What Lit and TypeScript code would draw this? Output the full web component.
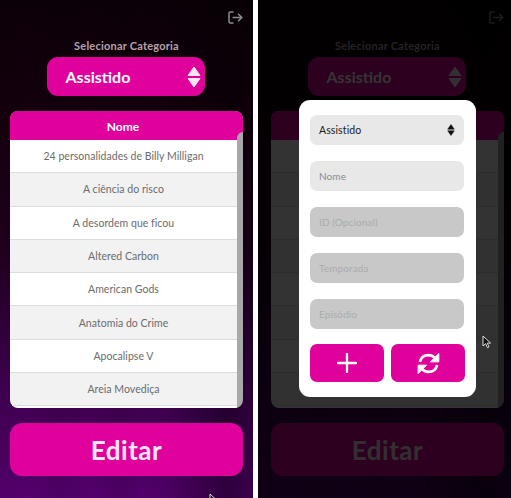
import { LitElement, html, css, svg } from "lit";
import { customElement } from "lit/decorators.js";

const ROWS = [
  "24 personalidades de Billy Milligan",
  "A ciência do risco",
  "A desordem que ficou",
  "Altered Carbon",
  "American Gods",
  "Anatomia do Crime",
  "Apocalipse V",
  "Areia Movediça",
  "",
];

const pointer = svg`<svg class="cursor-svg" viewBox="0 0 10 14" width="10" height="14"><path d="M1 1v10l2.600-2.300 1.800 4 1.600-.8-1.800-3.800h3.400z" fill="#111" stroke="#ddd" stroke-width="1"/></svg>`;

@customElement("app-root")
export class AppRoot extends LitElement {
  static styles = css`
    :host {
      display: grid;
      grid-template-columns: 253px 253px;
      column-gap: 5px;
      width: 511px;
      height: 498px;
      overflow: hidden;
      background: #fff;
      font-family: "Lato", "Noto Sans", sans-serif;
    }
    .panel {
      position: relative;
      height: 498px;
      box-sizing: border-box;
      padding: 10px 10px 0 10px;
      display: flex;
      flex-direction: column;
      overflow: hidden;
      background:
        linear-gradient(to right,
          rgba(0,0,0,.06) 0, rgba(0,0,0,.02) 12%, rgba(0,0,0,.1) 24%, rgba(0,0,0,.03) 36%,
          rgba(0,0,0,.12) 48%, rgba(0,0,0,.05) 56%, rgba(0,0,0,.1) 66%, rgba(0,0,0,.25) 76%,
          rgba(0,0,0,.45) 90%, rgba(0,0,0,.3) 100%),
        linear-gradient(to bottom, #0c0008 0, #170010 28%, #20001e 50%, #3a0048 72%, #560070 100%);
    }
    .panel.second { padding-left: 13px; padding-right: 7px; }
    .logout { align-self: flex-end; height: 15px; display: flex; }
    .label {
      margin-top: 14px;
      height: 14px;
      line-height: 14px;
      text-align: center;
      font-size: 11px;
      font-weight: 700;
      letter-spacing: .22px;
      color: #b3a4ae;
    }
    .select {
      align-self: center;
      margin-top: 4px;
      margin-right: 2px;
      width: 158px;
      height: 39px;
      box-sizing: border-box;
      padding: 0 4px 0 19px;
      border-radius: 11px;
      background: #e0009b;
      color: #fff;
      display: flex;
      align-items: center;
      justify-content: space-between;
      font-size: 16px;
      font-weight: 700;
    }
    .card {
      margin-top: 15px;
      height: 297px;
      flex: none;
      border-radius: 8px;
      overflow: hidden;
      background: #a9a7a9;
      display: flex;
      flex-direction: column;
    }
    .head {
      position: relative;
      flex: none;
      height: 29px;
      box-sizing: border-box;
      padding-right: 7px;
      background: #e0009b;
      color: #fff;
      font-size: 12px;
      font-weight: 700;
      text-align: center;
      line-height: 31px;
    }
    .head::after {
      content: "";
      position: absolute;
      right: 0;
      bottom: 0;
      width: 6px;
      height: 8px;
      background: #a9a7a9;
      border-top-left-radius: 6px;
    }
    .rows { margin-right: 6px; border-bottom-left-radius: 8px; overflow: hidden; }
    .row {
      height: 33.3px;
      box-sizing: border-box;
      border-bottom: 1px solid #dcdcdc;
      background: #fff;
      color: #6b6b6b;
      font-size: 10.5px;
      letter-spacing: .04px;
      display: flex;
      align-items: center;
      justify-content: center;
    }
    .row:nth-child(even) { background: #f2f2f2; }
    .edit {
      margin-top: 15px;
      height: 53px;
      flex: none;
      border-radius: 12px;
      background: #e0009b;
      color: #fbe6f5;
      display: flex;
      align-items: center;
      justify-content: center;
      font-size: 26px;
      font-weight: 700;
      letter-spacing: .5px;
    }
    .scrim { position: absolute; inset: 0; background: rgba(0,0,0,.8); }
    .modal {
      position: absolute;
      left: 41px;
      top: 100px;
      width: 177px;
      height: 297px;
      box-sizing: border-box;
      padding: 15px 12px 0 11px;
      background: #fff;
      border-radius: 11px;
      display: flex;
      flex-direction: column;
      gap: 16px;
    }
    .field {
      height: 30px;
      flex: none;
      box-sizing: border-box;
      padding: 0 9px;
      border-radius: 7px;
      background: #e8e8e8;
      display: flex;
      align-items: center;
      justify-content: space-between;
      font-size: 10px;
      letter-spacing: .1px;
      color: #8b8997;
    }
    .field.choice { color: #1a1a1a; font-size: 10.5px; }
    .field.off { background: #c8c8c8; color: #ababab; }
    .actions { display: grid; grid-template-columns: 74px 74px; column-gap: 7px; margin-top: -1px; }
    .action {
      height: 38px;
      border-radius: 7px;
      background: #e0009b;
      display: flex;
      align-items: center;
      justify-content: center;
    }
    .cursor { position: absolute; display: flex; }
    .cursor.a { left: 224px; top: 335px; }
    .cursor.b { left: 209px; top: 493px; }
  `;

  private arrows(w: number, h: number, fill: string) {
    return html`<svg viewBox="0 0 14 22" width=${w} height=${h}>
      <path d="M7 1 13 9.500H1Z" fill=${fill} stroke=${fill} stroke-width="1" stroke-linejoin="round"/>
      <path d="M7 21 13 12.500H1Z" fill=${fill} stroke=${fill} stroke-width="1" stroke-linejoin="round"/>
    </svg>`;
  }

  private screen(second: boolean) {
    return html`
      <div class="logout">
        <svg viewBox="0 0 15 15" width="15" height="15" fill="none" stroke="#8f8a8e" stroke-width="1.500">
          <path d="M5.500 2H2.200Q1 2 1 3.200v8.600Q1 13 2.200 13h3.300"/>
          <path d="M4.500 7.500h9M10 3.800l3.800 3.700L10 11.200"/>
        </svg>
      </div>
      <div class="label">Selecionar Categoria</div>
      <div class="select"><span>Assistido</span>${this.arrows(14, 22, "#fbe6f5")}</div>
      <div class="card">
        <div class="head">${second ? "" : "Nome"}</div>
        <div class="rows">${ROWS.map((r) => html`<div class="row">${second ? "" : r}</div>`)}</div>
      </div>
      <div class="edit">Editar</div>
      ${second
        ? html`<div class="scrim"></div>
            <div class="modal">
              <div class="field choice"><span>Assistido</span>${this.arrows(8, 12, "#111")}</div>
              <div class="field">Nome</div>
              <div class="field off">ID (Opcional)</div>
              <div class="field off">Temporada</div>
              <div class="field off">Episódio</div>
              <div class="actions">
                <div class="action">
                  <svg viewBox="0 0 20 20" width="20" height="20" stroke="#fff" stroke-width="2.300" stroke-linecap="round">
                    <path d="M10 1v18M1 10h18"/>
                  </svg>
                </div>
                <div class="action">
                  <svg viewBox="0 0 24 24" width="23" height="23">
                    <path d="M3 10.500C4 6 7.500 3.200 12 3.200c2.700 0 4.800 1 6.500 2.800M21 13.500C20 18 16.500 20.800 12 20.800c-2.700 0-4.800-1-6.500-2.800" fill="none" stroke="#fff" stroke-width="2.800"/>
                    <path d="M22.800 1.500v8.800H14Z M1.200 22.500v-8.800H10Z" fill="#fff" stroke="#fff" stroke-width="1" stroke-linejoin="round"/>
                  </svg>
                </div>
              </div>
            </div>
            <div class="cursor a">${pointer}</div>`
        : html`<div class="cursor b">${pointer}</div>`}
    `;
  }

  render() {
    return html`
      <section class="panel">${this.screen(false)}</section>
      <section class="panel second">${this.screen(true)}</section>
    `;
  }
}
